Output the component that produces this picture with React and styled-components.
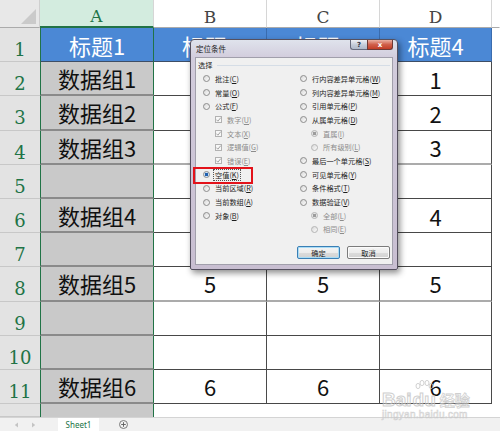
import React from 'react'
import styled, { createGlobalStyle } from 'styled-components'

const GlobalStyle = createGlobalStyle`
  html, body {
    margin: 0;
    padding: 0;
    overflow: hidden;
    background: #fff;
  }
`

const COLS = '40px 114px 113px 113px 112px 1fr'
const CJK = '"Noto Sans CJK SC", "Noto Sans", sans-serif'
const GREEN = '#217346'

const rows = [
  { n: 1, head: true, cells: ['标题1', '标题2', '标题3', '标题4'] },
  { n: 2, cells: ['数据组1', '1', '1', '1'] },
  { n: 3, cells: ['数据组2', '2', '2', '2'] },
  { n: 4, cells: ['数据组3', '3', '3', '3'], light: true },
  { n: 5, cells: ['', '', '', ''] },
  { n: 6, cells: ['数据组4', '4', '4', '4'] },
  { n: 7, cells: ['', '', '', ''] },
  { n: 8, cells: ['数据组5', '5', '5', '5'], light: true },
  { n: 9, cells: ['', '', '', ''] },
  { n: 10, cells: ['', '', '', ''] },
  { n: 11, cells: ['数据组6', '6', '6', '6'] }
]

const leftOptions = [
  { label: '批注', key: 'C' },
  { label: '常量', key: 'O' },
  { label: '公式', key: 'F' },
  { label: '数字', key: 'U', check: true },
  { label: '文本', key: 'X', check: true },
  { label: '逻辑值', key: 'G', check: true },
  { label: '错误', key: 'E', check: true },
  { label: '空值', key: 'K', selected: true },
  { label: '当前区域', key: 'R' },
  { label: '当前数组', key: 'A' },
  { label: '对象', key: 'B' }
]

const rightOptions = [
  { label: '行内容差异单元格', key: 'W' },
  { label: '列内容差异单元格', key: 'M' },
  { label: '引用单元格', key: 'P' },
  { label: '从属单元格', key: 'D' },
  { label: '直属', key: 'I', sub: true, selected: true },
  { label: '所有级别', key: 'L', sub: true },
  { label: '最后一个单元格', key: 'S' },
  { label: '可见单元格', key: 'Y' },
  { label: '条件格式', key: 'T' },
  { label: '数据验证', key: 'V' },
  { label: '全部', key: 'L', sub: true, selected: true },
  { label: '相同', key: 'E', sub: true }
]

const App = () => (
  <Page>
    <GlobalStyle />
    <Sheet>
      <Row $h={28}>
        <Corner>
          <CornerMark />
        </Corner>
        <ColHead $active>A</ColHead>
        <ColHead>B</ColHead>
        <ColHead>C</ColHead>
        <ColHead>D</ColHead>
        <ColHead $filler />
      </Row>
      {rows.map(row => (
        <Row key={row.n} $h={34.2}>
          <RowHead>{row.n}</RowHead>
          {row.cells.map((text, i) => (
            <Cell
              key={i}
              $first={i === 0}
              $head={row.head}
              $light={row.light}
            >
              {text}
            </Cell>
          ))}
          <Blank />
        </Row>
      ))}
      <Row $h={13}>
        <RowHead />
        <Cell $first $open />
        <Blank />
        <Blank />
        <Blank />
        <Blank />
      </Row>
    </Sheet>

    <TabBar>
      <Nav>
        <svg width="5" height="6" viewBox="0 0 5 6">
          <path d="M4 0.5 L0.8 3 L4 5.5 Z" fill="#c4c4c4" />
        </svg>
        <svg width="5" height="6" viewBox="0 0 5 6">
          <path d="M1 0.5 L4.2 3 L1 5.5 Z" fill="#c4c4c4" />
        </svg>
      </Nav>
      <SheetTab>Sheet1</SheetTab>
      <AddSheet>
        <svg width="9" height="9" viewBox="0 0 9 9">
          <circle cx="4.5" cy="4.5" r="4" fill="none" stroke="#7a7a7a" />
          <path d="M4.5 2.2 V6.8 M2.2 4.5 H6.8" stroke="#5a5a5a" strokeWidth="0.9" />
        </svg>
      </AddSheet>
    </TabBar>

    <Dialog>
      <TitleBar>
        <Title>定位条件</Title>
        <CaptionButtons>
          <HelpButton>?</HelpButton>
          <CloseButton>x</CloseButton>
        </CaptionButtons>
      </TitleBar>
      <Client>
        <GroupHead>
          <span>选择</span>
          <GroupLine />
        </GroupHead>
        <Options>
          <OptionColumn>
            {leftOptions.map(o => (
              <Option key={o.label} o={o} />
            ))}
          </OptionColumn>
          <OptionColumn>
            {rightOptions.map(o => (
              <Option key={o.label} o={o} />
            ))}
          </OptionColumn>
        </Options>
        <ButtonRow>
          <DialogButton $default>确定</DialogButton>
          <DialogButton>取消</DialogButton>
        </ButtonRow>
      </Client>
      <Highlight />
    </Dialog>

    <Watermark>
      <MarkTop>
        <MarkLatin>Bai</MarkLatin>
        <Paw>
          <svg width="22" height="10" viewBox="0 0 22 10">
            <g fill="none" stroke="#c6c6c6" strokeWidth="1">
              <ellipse cx="5" cy="6" rx="2" ry="2.6" />
              <ellipse cx="9" cy="3" rx="2" ry="2.6" />
              <ellipse cx="14" cy="3" rx="2" ry="2.6" />
              <ellipse cx="18" cy="6" rx="2" ry="2.6" />
            </g>
          </svg>
          <MarkLatin>du</MarkLatin>
        </Paw>
        <MarkCjk>经验</MarkCjk>
      </MarkTop>
      <MarkUrl>jingyan.baidu.com</MarkUrl>
    </Watermark>
  </Page>
)

const Option = ({ o }) => {
  const disabled = o.check || o.sub
  return (
    <Item $indent={o.check ? 12 : o.sub ? 11 : 0} $disabled={disabled}>
      {o.check ? (
        <CheckBox>
          <svg width="7" height="7" viewBox="0 0 7 7">
            <path d="M1.3 3.6 L2.9 5.2 L5.8 1.6" fill="none" stroke="#9a9a9a" strokeWidth="0.9" />
          </svg>
        </CheckBox>
      ) : (
        <Radio $on={o.selected} $muted={disabled} />
      )}
      <Label $focus={o.selected && !disabled}>
        {o.label}(<u>{o.key}</u>)
      </Label>
    </Item>
  )
}

export default App

const Page = styled.div`
  position: relative;
  width: 500px;
  height: 431px;
  overflow: hidden;
  background: #fff;
  display: flex;
  flex-direction: column;
`

const Sheet = styled.div`
  flex: 1;
  display: flex;
  flex-direction: column;
  overflow: hidden;
`

const Row = styled.div`
  flex: none;
  display: grid;
  grid-template-columns: ${COLS};
  height: ${p => p.$h}px;
`

const Corner = styled.div`
  background: #e8e8e8;
  border-right: 1px solid #cfcfcf;
  border-bottom: 1px solid #ababab;
  box-sizing: border-box;
  display: flex;
  align-items: flex-end;
  justify-content: flex-end;
  padding: 0 3px 3px 0;
`

const CornerMark = styled.div`
  width: 0;
  height: 0;
  border-left: 15px solid transparent;
  border-bottom: 15px solid #cacaca;
`

const ColHead = styled.div`
  box-sizing: border-box;
  display: flex;
  justify-content: center;
  align-items: center;
  padding-top: 6px;
  font: 17px "DejaVu Serif", serif;
  color: ${p => (p.$active ? GREEN : '#454545')};
  background: ${p => (p.$active ? '#d3ecdf' : '#fff')};
  border-right: 1px solid ${p => (p.$filler ? 'transparent' : '#d6d6d6')};
  border-bottom: ${p => (p.$active ? `2px solid ${GREEN}` : '1px solid #ababab')};
`

const RowHead = styled.div`
  box-sizing: border-box;
  display: flex;
  justify-content: center;
  align-items: center;
  padding-top: 10px;
  background: #e3e3e3;
  border-bottom: 1px solid #c8c8c8;
  color: ${GREEN};
  font: 18px "DejaVu Serif", serif;
`

const Cell = styled.div`
  box-sizing: border-box;
  display: flex;
  justify-content: center;
  align-items: center;
  font: 22px ${CJK};
  color: ${p => (p.$head ? '#fff' : '#111')};
  background: ${p => (p.$head ? '#4b88d5' : p.$first ? '#c9c9c9' : '#fff')};
  border-left: ${p => (p.$first ? `1px solid ${GREEN}` : 'none')};
  border-right: 1px solid ${p => (p.$first ? GREEN : p.$head ? '#3a6cae' : '#4a4a4a')};
  border-bottom: ${p =>
    p.$open
      ? 'none'
      : p.$head
      ? '1px solid #3e4e66'
      : p.$first
      ? '2px solid #8a8a8a'
      : p.$light
      ? '2px solid #ababab'
      : '1px solid #474747'};
`

const Blank = styled.div`
  background: #fff;
`

const TabBar = styled.div`
  flex: none;
  height: 14px;
  box-sizing: border-box;
  display: flex;
  align-items: stretch;
  background: #f1f1f1;
  border-top: 1px solid #d4d4d4;
`

const Nav = styled.div`
  display: flex;
  align-items: center;
  gap: 12px;
  padding-left: 14px;
  width: 44px;
  box-sizing: border-box;
`

const SheetTab = styled.div`
  width: 41px;
  margin-left: 14px;
  background: #fff;
  display: flex;
  align-items: center;
  justify-content: center;
  color: ${GREEN};
  font: 8px "Noto Sans", sans-serif;
`

const AddSheet = styled.div`
  display: flex;
  align-items: center;
  margin-left: 20px;
`

const Dialog = styled.div`
  position: absolute;
  left: 190px;
  top: 39px;
  width: 208px;
  height: 231px;
  box-sizing: border-box;
  border: 1px solid #55505f;
  border-radius: 4px 4px 2px 2px;
  background: linear-gradient(180deg, #dfe3ec 0, #d2ccdc 18px, #c8bed1 100%);
  box-shadow: 2px 3px 6px rgba(0, 0, 0, 0.45);
  display: flex;
  flex-direction: column;
  font-family: ${CJK};
`

const TitleBar = styled.div`
  flex: none;
  height: 17px;
  display: flex;
  justify-content: space-between;
  align-items: flex-start;
  padding: 0 4px 0 5px;
`

const Title = styled.span`
  align-self: center;
  font-size: 7.5px;
  color: #1b1b1b;
`

const CaptionButtons = styled.div`
  display: flex;
`

const HelpButton = styled.div`
  width: 17px;
  height: 10px;
  box-sizing: border-box;
  border: 1px solid #676b7d;
  border-top: none;
  border-right: none;
  border-radius: 0 0 0 3px;
  background: linear-gradient(180deg, #eef1f6, #c3cbd8 55%, #aeb8c9);
  color: #2f3440;
  font: bold 7px "DejaVu Sans", sans-serif;
  display: flex;
  align-items: center;
  justify-content: center;
`

const CloseButton = styled.div`
  width: 26px;
  height: 10px;
  box-sizing: border-box;
  border: 1px solid #6d3a36;
  border-top: none;
  border-radius: 0 0 3px 0;
  background: linear-gradient(180deg, #eab1a3, #d0604b 50%, #c23d26);
  color: #fff;
  font: bold 7px "DejaVu Sans", sans-serif;
  display: flex;
  align-items: center;
  justify-content: center;
`

const Client = styled.div`
  flex: 1;
  margin: 0 4px 4px;
  background: #f0f0f0;
  border: 1px solid #a19fab;
  display: flex;
  flex-direction: column;
  font-size: 7.2px;
  color: #1e1e1e;
`

const GroupHead = styled.div`
  height: 14px;
  display: flex;
  align-items: center;
  padding: 0 2px;
`

const GroupLine = styled.div`
  flex: 1;
  height: 1px;
  margin-left: 5px;
  background: #d5dde6;
`

const Options = styled.div`
  display: grid;
  grid-template-columns: 97px 1fr;
  padding-left: 6.5px;
`

const OptionColumn = styled.div`
  display: flex;
  flex-direction: column;
`

const Item = styled.div`
  height: 13.7px;
  display: flex;
  align-items: center;
  gap: 4.5px;
  padding-left: ${p => p.$indent}px;
  color: ${p => (p.$disabled ? '#8c8c8c' : '#1e1e1e')};
  white-space: nowrap;
`

const Radio = styled.span`
  width: 7px;
  height: 7px;
  box-sizing: border-box;
  border-radius: 50%;
  border: 1px solid ${p => (p.$muted ? '#b4b4b4' : '#8d8d8d')};
  background: ${p =>
    p.$on
      ? p.$muted
        ? 'radial-gradient(circle, #9c9c9c 0 1.5px, #e6e6e6 2px)'
        : 'radial-gradient(circle, #1f5fae 0 1.5px, #cfe3f6 2px)'
      : 'linear-gradient(135deg, #d9d9d9, #fbfbfb)'};
`

const CheckBox = styled.span`
  width: 7px;
  height: 7px;
  box-sizing: border-box;
  border: 1px solid #b2b2b2;
  background: #f7f7f7;
  display: flex;
  align-items: center;
  justify-content: center;
  svg {
    flex: none;
  }
`

const Label = styled.span`
  padding: 0 1px;
  outline: ${p => (p.$focus ? '1px dotted #555' : 'none')};
  u {
    text-decoration-thickness: 0.5px;
  }
`

const ButtonRow = styled.div`
  margin-top: auto;
  display: flex;
  justify-content: flex-end;
  gap: 7px;
  padding: 0 2px 5px 0;
`

const DialogButton = styled.div`
  width: 43px;
  height: 13px;
  box-sizing: border-box;
  border: 1px solid ${p => (p.$default ? '#3a7fb5' : '#7b7b7b')};
  border-radius: 2px;
  background: linear-gradient(180deg, #f4f4f4 0, #ececec 50%, #dcdcdc 51%, #d2d2d2 100%);
  box-shadow: ${p => (p.$default ? 'inset 0 0 0 1px #a9dcf6' : 'inset 0 0 0 1px #fbfbfb')};
  display: flex;
  align-items: center;
  justify-content: center;
  font-size: 7.2px;
  color: #1e1e1e;
`

const Highlight = styled.div`
  position: absolute;
  left: 2px;
  top: 127px;
  width: 60px;
  height: 17px;
  box-sizing: border-box;
  border: 2px solid #e3121a;
`

const Watermark = styled.div`
  position: absolute;
  left: 382px;
  top: 380px;
  display: flex;
  flex-direction: column;
  pointer-events: none;
  opacity: 0.8;
`

const MarkTop = styled.div`
  display: flex;
  align-items: flex-end;
  gap: 1px;
`

const Paw = styled.div`
  display: flex;
  flex-direction: column;
  align-items: center;
`

const MarkLatin = styled.span`
  font: bold 19px "Liberation Sans", sans-serif;
  color: rgba(255, 255, 255, 0.4);
  -webkit-text-stroke: 1px #c4c4c4;
  line-height: 19px;
`

const MarkCjk = styled.span`
  margin-left: 3px;
  font: bold 15px ${CJK};
  color: rgba(255, 255, 255, 0.4);
  -webkit-text-stroke: 0.8px #c4c4c4;
  line-height: 19px;
`

const MarkUrl = styled.span`
  font: 10px "Liberation Sans", sans-serif;
  color: rgba(255, 255, 255, 0.4);
  -webkit-text-stroke: 0.6px #c8c8c8;
  line-height: 11px;
  letter-spacing: 0.3px;
`
